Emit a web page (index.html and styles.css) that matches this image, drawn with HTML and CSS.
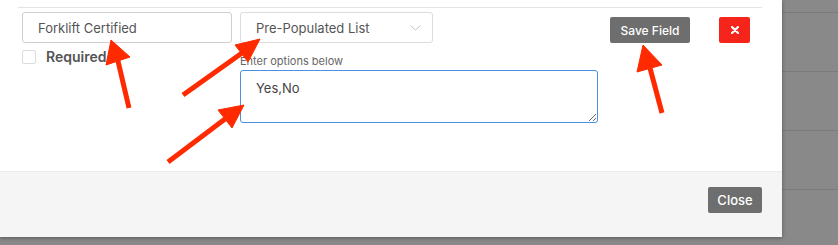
FILE: index.html
```html
<!DOCTYPE html>
<html lang="en">
<head>
  <meta charset="UTF-8">
  <meta name="viewport" content="width=device-width, initial-scale=1.0">
  <title>Custom Fields</title>
  <link rel="stylesheet" href="styles.css">
</head>
<body>
  <div class="modal">
    <div class="modal-body">
      <div class="field-row">
        <div class="col-name">
          <input type="text" class="field-input" value="Forklift Certified">
          <label class="required">
            <span class="check"></span>
            Required
          </label>
        </div>
        <div class="col-type">
          <div class="select-box">
            <span>Pre-Populated List</span>
            <svg class="chevron" width="11" height="6" viewBox="0 0 11 6">
              <path d="M0.5 0.5 L5.5 5 L10.5 0.5" fill="none" stroke="#c4c4c4" stroke-width="1"/>
            </svg>
          </div>
          <div class="options-label">Enter options below</div>
          <textarea class="options">Yes,No</textarea>
        </div>
        <button class="btn btn-save">Save Field</button>
        <button class="btn btn-remove">
          <svg width="8" height="8" viewBox="0 0 8 8">
            <path d="M1 1 L7 7 M7 1 L1 7" stroke="#fff" stroke-width="2.2" stroke-linecap="round"/>
          </svg>
        </button>
      </div>
    </div>
    <div class="modal-footer">
      <button class="btn btn-close">Close</button>
    </div>
  </div>

  <!-- annotation arrows -->
  <svg class="arrows" width="838" height="245" viewBox="0 0 838 245">
    <g stroke="#ff2a00" stroke-width="5" fill="#ff2a00">
      <line x1="129" y1="108" x2="118" y2="61"/>
      <polygon points="111,40 106,65 130,57" stroke-width="1"/>
      <line x1="183" y1="95" x2="242" y2="53"/>
      <polygon points="260,39 235,45 248,62" stroke-width="1"/>
      <line x1="168" y1="162" x2="225" y2="119"/>
      <polygon points="244,105 218,110 232,128" stroke-width="1"/>
      <line x1="662" y1="113" x2="650" y2="68"/>
      <polygon points="643,45 637,72 662,65" stroke-width="1"/>
    </g>
  </svg>
</body>
</html>
```

FILE: styles.css
```css
body {
  margin: 0;
  width: 838px;
  height: 245px;
  overflow: hidden;
  font-family: Inter, "Liberation Sans", Arial, sans-serif;
  background-color: #898989;
  background-image: repeating-linear-gradient(to bottom, transparent 0, transparent 12px, #7b7b7b 12px, #7b7b7b 13px, transparent 13px, transparent 59px);
  background-position: 0 0;
  position: relative;
}
.modal {
  width: 782px;
  height: 237px;
  background: white;
  box-shadow: 0 1px 4px rgba(0, 0, 0, 0.35);
  display: flex;
  flex-direction: column;
}
.modal-body {
  flex: 1;
  padding: 7px 20px 0 18px;
}
.field-row {
  border-top: 1px solid #e3e3e3;
  padding: 4px 0 0 4px;
  display: flex;
  align-items: flex-start;
}
.col-name {
  width: 210px;
  margin-right: 8px;
}
.field-input {
  width: 100%;
  height: 31px;
  box-sizing: border-box;
  border: 1px solid #cfcfd3;
  border-radius: 3px;
  padding: 0 15px;
  font-family: inherit;
  font-size: 13px;
  color: #555;
  margin: 0;
}
.required {
  display: flex;
  align-items: center;
  margin-top: 5px;
  font-size: 14px;
  font-weight: 600;
  color: #555;
}
.check {
  width: 12px;
  height: 12px;
  border: 1px solid #dcdcdc;
  border-radius: 2px;
  margin-right: 10px;
}
.col-type {
  width: 358px;
}
.select-box {
  width: 193px;
  height: 31px;
  box-sizing: border-box;
  border: 1px solid #dcdce0;
  border-radius: 3px;
  padding: 0 11px 0 15px;
  display: flex;
  align-items: center;
  justify-content: space-between;
  font-size: 13px;
  color: #555;
}
.options-label {
  margin-top: 11px;
  font-size: 11px;
  line-height: 15px;
  color: #666;
  margin-bottom: 1px;
}
.options {
  display: block;
  width: 358px;
  height: 53px;
  box-sizing: border-box;
  border: 1px solid #4a90e2;
  border-radius: 3px;
  padding: 9px 15px 5px;
  font-family: inherit;
  font-size: 13px;
  color: #444;
  outline: none;
  resize: vertical;
  margin: 0;
}
.btn {
  border: none;
  border-radius: 2px;
  color: white;
  font-family: inherit;
  font-size: 12px;
  font-weight: 500;
  cursor: pointer;
  height: 26px;
  padding: 0;
}
.btn-save {
  background: #6e6e6e;
  width: 80px;
  margin: 5px 0 0 12px;
}
.btn-remove {
  background: #f5251c;
  width: 31px;
  margin: 5px 0 0 29px;
  display: flex;
  align-items: center;
  justify-content: center;
}
.modal-footer {
  background: #f5f5f5;
  border-top: 1px solid #ececec;
  padding: 15px 20px 0 0;
  height: 50px;
  display: flex;
  justify-content: flex-end;
  align-items: flex-start;
}
.btn-close {
  background: #6e6e6e;
  width: 54px;
  font-size: 13px;
  font-weight: 500;
}
.arrows {
  position: absolute;
  left: 0;
  top: 0;
  pointer-events: none;
}
```
